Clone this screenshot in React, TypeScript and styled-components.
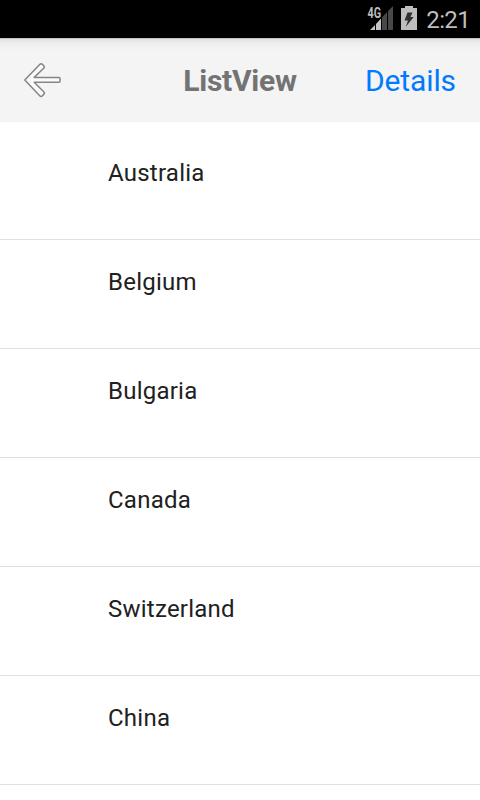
import React from 'react';
import styled, { createGlobalStyle } from 'styled-components';

const GlobalStyle = createGlobalStyle`
  * { box-sizing: border-box; }
  body { margin: 0; background: #fff; overflow: hidden; }
`;
const Screen = styled.main`
  width: 480px;
  height: 800px;
  overflow: hidden;
  background: #fff;
  font-family: Roboto, sans-serif;
`;
const StatusBar = styled.div`
  height: 38px;
  background: #000;
  display: flex;
  justify-content: flex-end;
  align-items: center;
  padding-right: 10px;
`;
const SignalIcon = styled.svg`
  display: block;
  width: 27px;
  height: 38px;
`;
const BatteryIcon = styled.svg`
  display: block;
  width: 16px;
  height: 38px;
  margin-left: 7px;
`;
const Clock = styled.span`
  width: 45px;
  margin-left: 8px;
  padding-top: 2px;
  color: #bebebe;
  font-size: 24px;
  line-height: 36px;
  letter-spacing: -0.65px;
  text-align: right;
`;
const Header = styled.header`
  height: 84px;
  background: linear-gradient(#b8b8b8 0, #e0e0e0 1.5px, #e9e9e9 3px, #f0f0f0 7px, #f4f4f4 14px);
  display: grid;
  grid-template-columns: 120px 1fr 120px;
  align-items: center;
  padding: 0 24px;
`;
const BackIcon = styled.svg`
  display: block;
  width: 38px;
  height: 36px;
`;
const Title = styled.h1`
  margin: 0;
  color: #737373;
  font-size: 30px;
  font-weight: 700;
  letter-spacing: -0.25px;
  text-align: center;
`;
const Action = styled.a`
  color: #007aff;
  font-size: 30px;
  letter-spacing: -0.1px;
  text-align: right;
`;
const List = styled.ul`
  margin: 0;
  padding: 9px 0 0;
  list-style: none;
`;
const Row = styled.li`
  height: 109px;
  padding: 27px 0 0 108px;
  border-bottom: 1px solid #e0e0e0;
  color: #212121;
  font-size: 24px;
  line-height: 30px;
  letter-spacing: 0.24px;
`;
const NetworkLabel = styled.text`
  font: 700 14px Roboto, sans-serif;
  fill: #bebebe;
  stroke: #000;
  stroke-width: 1px;
  paint-order: stroke;
`;

const countries = ['Australia', 'Belgium', 'Bulgaria', 'Canada', 'Switzerland', 'China'];

export default function App() {
  return (
    <Screen>
      <GlobalStyle />
      <StatusBar>
        <SignalIcon viewBox="0 0 27 38">
          <path d="M3 30L8 25V30ZM9 24L14 18.5V30H9Z" fill="#c4c4c4" />
          <path d="M15 17.5L20 12V30H15ZM21 11L26 6V30H21Z" fill="#484848" />
          <NetworkLabel x="0.5" y="17.5" textLength="13.5" lengthAdjust="spacingAndGlyphs">4G</NetworkLabel>
        </SignalIcon>
        <BatteryIcon viewBox="0 0 16 38">
          <path d="M0 8H4V6H12V8H16V30H0Z" fill="#bebebe" />
          <path d="M6.5 12.5H11.5L9.5 17H12.7L4.7 27L7 20.5H3.5Z" fill="#303030" />
        </BatteryIcon>
        <Clock>2:21</Clock>
      </StatusBar>
      <Header>
        <BackIcon viewBox="0 0 38 36" fill="#fafafa" stroke="#858585" strokeWidth="1.5" strokeLinejoin="round">
          <path d="M0.8 18L15.7 2.4Q17 1 18.4 2.4L19.7 3.7Q21 5 19.7 6.3L10.2 15.4H35Q36 15.4 36 16.4V19.3Q36 20.3 35 20.3H10.2L19.7 29.8Q21 31.1 19.7 32.4L18.4 33.7Q17 35.1 15.7 33.7Z" />
        </BackIcon>
        <Title>ListView</Title>
        <Action>Details</Action>
      </Header>
      <List>{countries.map((c) => <Row key={c}>{c}</Row>)}</List>
    </Screen>
  );
}
